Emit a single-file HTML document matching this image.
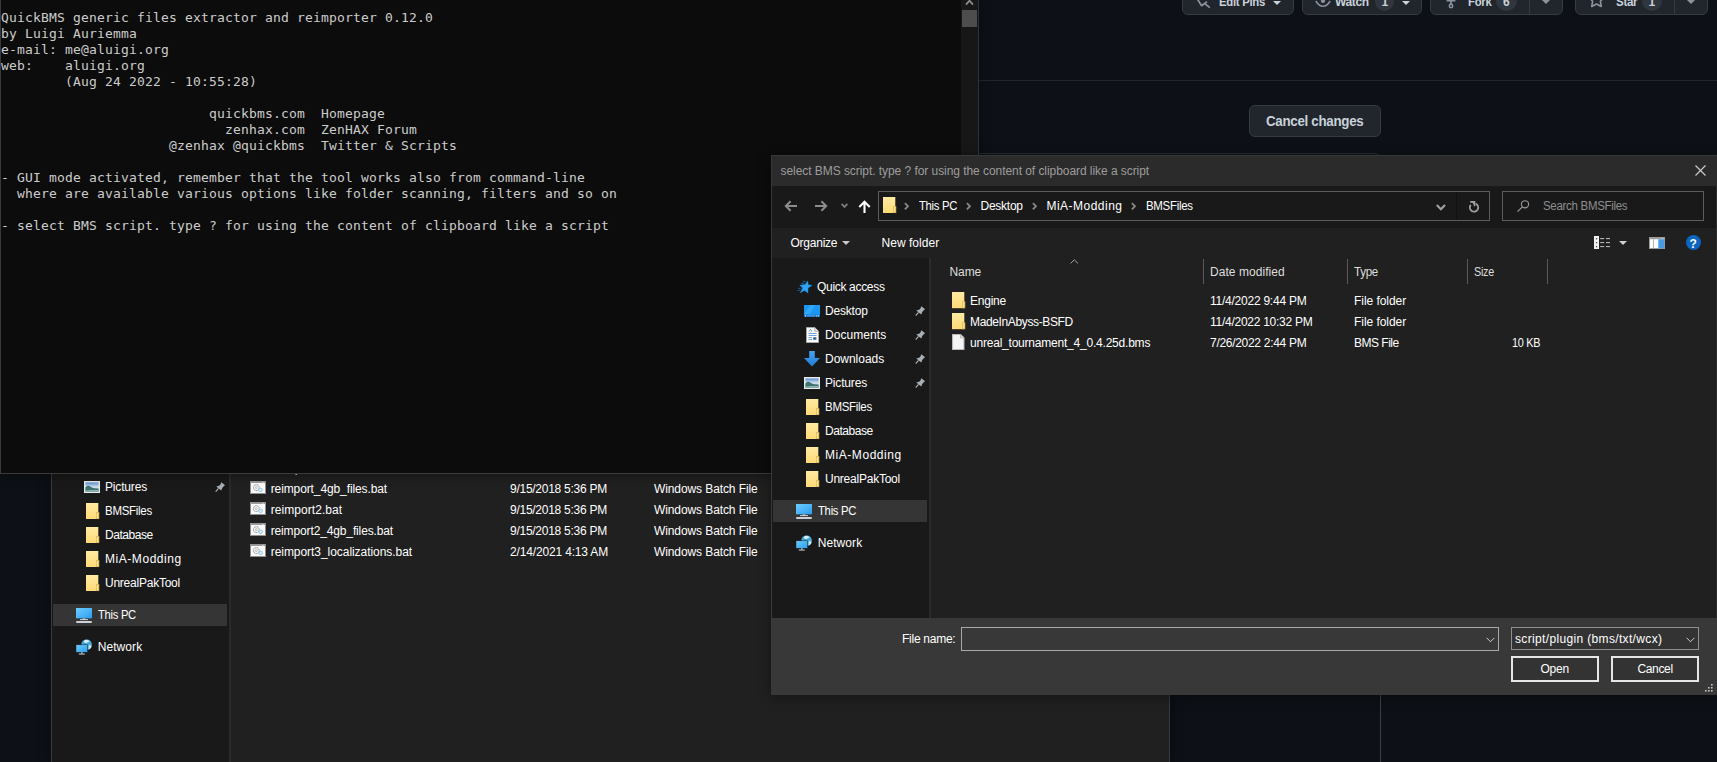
<!DOCTYPE html>
<html lang="en">
<head>
<meta charset="utf-8">
<title>QuickBMS - select BMS script</title>
<style>
*{box-sizing:border-box;margin:0;padding:0}
html,body{width:1717px;height:762px;overflow:hidden;background:#0d1117}
body{position:relative;font-family:"Liberation Sans",sans-serif;font-size:12px;color:#fff}
.r{position:absolute}
.t{position:absolute;white-space:nowrap;line-height:16px;height:16px}
svg{position:absolute;overflow:visible}
.ghb{position:absolute;top:-14px;height:29px;background:#21262d;border:1px solid #363b42;border-radius:6px}
.pill{position:absolute;top:-10px;height:21px;border-radius:10.5px;background:#30363d}
.caret{position:absolute;width:0;height:0;border-left:4px solid transparent;border-right:4px solid transparent;border-top:4px solid #c9d1d9}
pre{position:absolute;left:1px;top:10px;font-family:"DejaVu Sans Mono","Liberation Mono",monospace;font-size:13px;letter-spacing:.174px;line-height:16px;color:#cccccc}
</style>
</head>
<body>
<svg width="0" height="0" style="left:-10px;top:-10px" aria-hidden="true">
<linearGradient id="gf" x1="0" y1="0" x2="0" y2="1"><stop offset="0" stop-color="#ffe9a2"/><stop offset="1" stop-color="#ffdb76"/></linearGradient>
<linearGradient id="gb" x1="0" y1="0" x2="0" y2="1"><stop offset="0" stop-color="#45a3ee"/><stop offset="1" stop-color="#1e7fd8"/></linearGradient>
<linearGradient id="gs" x1="0" y1="0" x2="1" y2="1"><stop offset="0" stop-color="#6fcbff"/><stop offset="1" stop-color="#2a9ff0"/></linearGradient>
<linearGradient id="gd" x1="0" y1="0" x2="1" y2="1"><stop offset="0" stop-color="#1592f0"/><stop offset=".5" stop-color="#2aa6fb"/><stop offset="1" stop-color="#1490ee"/></linearGradient>
<linearGradient id="gp" x1="0" y1="0" x2="0" y2="1"><stop offset="0" stop-color="#4a84c6"/><stop offset=".5" stop-color="#cfe2ef"/><stop offset="1" stop-color="#6fa3ab"/></linearGradient>
</svg>
<section id="github-page" aria-label="GitHub repository page (background browser window)">
<div class="r" style="left:978px;top:80px;width:739px;height:1px;background:#21262d;"></div>
<div class="r" style="left:900px;top:153px;width:481px;height:700px;border:1px solid #262c34;border-right-color:#3a4048;border-radius:6px"></div>
<div class="ghb" style="left:1182px;width:112px"></div>
<div class="ghb" style="left:1302px;width:120px"></div>
<div class="ghb" style="left:1430px;width:133px"></div><div class="r" style="left:1529px;top:-14px;width:1px;height:28px;background:#363b42;"></div>
<div class="ghb" style="left:1575px;width:133px"></div><div class="r" style="left:1674px;top:-14px;width:1px;height:28px;background:#363b42;"></div>
<div class="pill" style="left:1375px;width:19px"></div>
<div class="pill" style="left:1496px;width:21px"></div>
<div class="pill" style="left:1642px;width:20px"></div>
<div class="t" style="top:-6px;left:1219.3px;color:#c9d1d9;font-weight:bold;transform:scaleX(0.944);transform-origin:0 50%;letter-spacing:-0.300px;">Edit Pins</div>
<div class="t" style="top:-6px;left:1335px;color:#c9d1d9;font-weight:bold;letter-spacing:-0.341px;">Watch</div>
<div class="t" style="top:-6px;left:1381.5px;color:#c9d1d9;font-weight:bold;">1</div>
<div class="t" style="top:-6px;left:1467.5px;color:#c9d1d9;font-weight:bold;transform:scaleX(0.944);transform-origin:0 50%;letter-spacing:-0.300px;">Fork</div>
<div class="t" style="top:-6px;left:1503px;color:#c9d1d9;font-weight:bold;">6</div>
<div class="t" style="top:-6px;left:1615.8px;color:#c9d1d9;font-weight:bold;transform:scaleX(0.962);transform-origin:0 50%;letter-spacing:-0.300px;">Star</div>
<div class="t" style="top:-6px;left:1648.5px;color:#c9d1d9;font-weight:bold;">1</div>
<div class="caret" style="left:1272.8px;top:1px"></div>
<div class="caret" style="left:1401.5px;top:1px"></div>
<div class="caret" style="left:1542px;top:0px;border-top-color:#8b949e"></div>
<div class="caret" style="left:1687px;top:0px;border-top-color:#8b949e"></div>
<svg style="left:1194px;top:-8px" width="16" height="16" viewBox="0 0 16 16"><path d="M2.7 6 7.6 13.7 13 9.6M10.5 11.3 15.8 15.7" stroke="#8b949e" stroke-width="1.7" fill="none" stroke-linejoin="round"/></svg>
<svg style="left:1315px;top:-7.4px" width="16" height="16" viewBox="0 0 16 16"><path d="M.8 8C3 11.6 5.5 13.3 8 13.3 10.5 13.3 13 11.6 15.2 8" stroke="#8b949e" stroke-width="1.5" fill="none"/><circle cx="8" cy="8" r="2.1" fill="#8b949e"/></svg>
<svg style="left:1443px;top:-7px" width="16" height="16" viewBox="0 0 16 16"><path d="M8 5V11" stroke="#8b949e" stroke-width="1.7"/><path d="M3.6 7.6H12.4" stroke="#8b949e" stroke-width="1.8"/><circle cx="8" cy="13" r="1.7" fill="none" stroke="#8b949e" stroke-width="1.5"/></svg>
<svg style="left:1587.6px;top:-9.3px" width="17" height="17" viewBox="0 0 16 16"><path d="M8 .8 10.2 5.4 15.2 6.1 11.6 9.6 12.5 14.6 8 12.2 3.5 14.6 4.4 9.6 .8 6.1 5.8 5.4Z" stroke="#8b949e" stroke-width="1.5" fill="none" stroke-linejoin="round"/></svg>
<div class="r" style="left:1249px;top:105px;width:132px;height:32px;background:#21262d;border:1px solid #363b42;border-radius:6px"></div>
<div class="t" style="top:111px;left:1266px;color:#c9d1d9;font-size:14px;line-height:20px;height:20px;font-weight:bold;transform:scaleX(0.951);transform-origin:0 50%;letter-spacing:-0.300px;">Cancel changes</div>
</section>
<section id="explorer-window" aria-label="File Explorer window">
<div class="r" style="left:51px;top:473px;width:1119px;height:289px;background:#202020;box-shadow:0 0 12px rgba(0,0,0,.45)"></div>
<div class="r" style="left:51px;top:473px;width:1px;height:289px;background:#3a3a3a;"></div>
<div class="r" style="left:1169px;top:473px;width:1px;height:289px;background:#3a3a3a;"></div>
<div class="r" style="left:52px;top:473px;width:177px;height:289px;background:#191919;"></div>
<div class="r" style="left:229px;top:473px;width:2px;height:289px;background:#2a2a2a;"></div>
<div class="r" style="left:53px;top:604px;width:174px;height:22px;background:#353535;"></div>
<svg class="ic-pics" style="left:84px;top:481px" width="16" height="12" viewBox="0 0 16 12" preserveAspectRatio="none"><rect x=".7" y=".7" width="14.6" height="10.6" fill="url(#gp)" stroke="#ececec" stroke-width="1.4"/><path d="M1.4 6.6C3 4.4 4.8 4.2 6.6 5.8 8.6 7.4 11 7.7 14.6 7.4V10.6H1.4Z" fill="#3f716e"/><path d="M1.4 9.3C5 8.8 10 9 14.6 8.9V10.6H1.4Z" fill="#8db3b6"/></svg>
<div class="t" style="top:479px;left:105px;letter-spacing:-0.166px;">Pictures</div>
<svg class="ic-folder" style="left:85.7px;top:503px" width="14" height="16" viewBox="0 0 14 16" preserveAspectRatio="none"><rect x="0" y="0" width="12.3" height="16" fill="url(#gf)"/><rect x="10.5" y="9.6" width="2.4" height="6.1" fill="#ffe48d" stroke="#dcb551" stroke-width=".7"/></svg>
<div class="t" style="top:503px;left:105px;transform:scaleX(0.958);transform-origin:0 50%;letter-spacing:-0.300px;">BMSFiles</div>
<svg class="ic-folder" style="left:85.7px;top:527px" width="14" height="16" viewBox="0 0 14 16" preserveAspectRatio="none"><rect x="0" y="0" width="12.3" height="16" fill="url(#gf)"/><rect x="10.5" y="9.6" width="2.4" height="6.1" fill="#ffe48d" stroke="#dcb551" stroke-width=".7"/></svg>
<div class="t" style="top:527px;left:105px;letter-spacing:-0.454px;">Database</div>
<svg class="ic-folder" style="left:85.7px;top:551px" width="14" height="16" viewBox="0 0 14 16" preserveAspectRatio="none"><rect x="0" y="0" width="12.3" height="16" fill="url(#gf)"/><rect x="10.5" y="9.6" width="2.4" height="6.1" fill="#ffe48d" stroke="#dcb551" stroke-width=".7"/></svg>
<div class="t" style="top:551px;left:105px;letter-spacing:0.550px;">MiA-Modding</div>
<svg class="ic-folder" style="left:85.7px;top:575px" width="14" height="16" viewBox="0 0 14 16" preserveAspectRatio="none"><rect x="0" y="0" width="12.3" height="16" fill="url(#gf)"/><rect x="10.5" y="9.6" width="2.4" height="6.1" fill="#ffe48d" stroke="#dcb551" stroke-width=".7"/></svg>
<div class="t" style="top:575px;left:105px;letter-spacing:-0.237px;">UnrealPakTool</div>
<svg class="ic-pc" style="left:76px;top:608px" width="16" height="15" viewBox="0 0 16 15" preserveAspectRatio="none"><rect x="0" y="0" width="16" height="10.3" fill="url(#gs)"/><rect x="6.7" y="10.3" width="2.6" height="1.2" fill="#9fb8c8"/><rect x="4" y="11.2" width="8" height=".9" fill="#dfe8ee"/><rect x="0" y="13.1" width="16" height="1.8" rx=".8" fill="#c9d2da"/></svg>
<div class="t" style="top:607px;left:97.7px;transform:scaleX(0.934);transform-origin:0 50%;letter-spacing:-0.300px;">This PC</div>
<svg class="ic-net" style="left:76px;top:639px" width="16" height="16" viewBox="0 0 16 16" preserveAspectRatio="none"><circle cx="10.6" cy="5.6" r="5.3" fill="#4aa6d8"/><path d="M7.5 2.2C9 .8 12 .6 13.6 2.2 12 2.6 11.4 4.2 9.6 4 8.6 3.8 8.2 2.8 7.5 2.2Z" fill="#d9f0fb"/><path d="M13 6C14.5 5.6 15.6 6.6 15.4 8 14.8 9.6 13.6 10.4 12.4 10.6 13 9 12.4 7.4 13 6Z" fill="#c8e8f6"/><rect x="0" y="5.8" width="11.6" height="7.5" fill="url(#gs)" stroke="#191919" stroke-width=".5"/><rect x="5" y="13.3" width="1.6" height="1.5" fill="#9fb8c8"/><rect x="2.8" y="14.6" width="6" height=".9" fill="#dfe8ee"/></svg>
<div class="t" style="top:639px;left:97.7px;letter-spacing:0.081px;">Network</div>
<svg class="ic-pin" style="left:215px;top:482px" width="10.5" height="10.5" viewBox="0 0 11 11" preserveAspectRatio="none"><path d="M6.7 .3 10.5 3.4 8.6 5 7.6 6.3 6.5 9 1.3 4.6 4.2 3.8 5.5 2.9Z" fill="#a7afb5"/><path d="M3.7 6.7 .7 10.2" stroke="#a7afb5" stroke-width="1.25"/></svg>
<svg class="ic-bat" style="left:250px;top:481px" width="16" height="13" viewBox="0 0 16 13" preserveAspectRatio="none"><rect x=".5" y=".5" width="15" height="12" fill="#fafafa" stroke="#8e8e8e"/><rect x=".5" y=".5" width="15" height="1.5" fill="#9a9a9a"/><rect x="12.2" y=".9" width="1.6" height=".7" fill="#e8e8e8"/><circle cx="6.3" cy="6.6" r="2.9" fill="none" stroke="#8c8c8c" stroke-width="1" stroke-dasharray="1.3 .45"/><circle cx="6.3" cy="6.6" r="1" fill="none" stroke="#999" stroke-width=".6"/><circle cx="10.6" cy="8.9" r="1.8" fill="#cfeafa" stroke="#86c4ea" stroke-width=".8"/><circle cx="10.6" cy="8.9" r=".5" fill="#fff"/></svg>
<div class="t" style="top:481px;left:270.7px;letter-spacing:-0.106px;">reimport_4gb_files.bat</div>
<div class="t" style="top:481px;left:510px;letter-spacing:-0.264px;">9/15/2018 5:36 PM</div>
<div class="t" style="top:481px;left:654px;letter-spacing:-0.099px;">Windows Batch File</div>
<svg class="ic-bat" style="left:250px;top:502px" width="16" height="13" viewBox="0 0 16 13" preserveAspectRatio="none"><rect x=".5" y=".5" width="15" height="12" fill="#fafafa" stroke="#8e8e8e"/><rect x=".5" y=".5" width="15" height="1.5" fill="#9a9a9a"/><rect x="12.2" y=".9" width="1.6" height=".7" fill="#e8e8e8"/><circle cx="6.3" cy="6.6" r="2.9" fill="none" stroke="#8c8c8c" stroke-width="1" stroke-dasharray="1.3 .45"/><circle cx="6.3" cy="6.6" r="1" fill="none" stroke="#999" stroke-width=".6"/><circle cx="10.6" cy="8.9" r="1.8" fill="#cfeafa" stroke="#86c4ea" stroke-width=".8"/><circle cx="10.6" cy="8.9" r=".5" fill="#fff"/></svg>
<div class="t" style="top:502px;left:270.7px;letter-spacing:0.066px;">reimport2.bat</div>
<div class="t" style="top:502px;left:510px;letter-spacing:-0.264px;">9/15/2018 5:36 PM</div>
<div class="t" style="top:502px;left:654px;letter-spacing:-0.099px;">Windows Batch File</div>
<svg class="ic-bat" style="left:250px;top:523px" width="16" height="13" viewBox="0 0 16 13" preserveAspectRatio="none"><rect x=".5" y=".5" width="15" height="12" fill="#fafafa" stroke="#8e8e8e"/><rect x=".5" y=".5" width="15" height="1.5" fill="#9a9a9a"/><rect x="12.2" y=".9" width="1.6" height=".7" fill="#e8e8e8"/><circle cx="6.3" cy="6.6" r="2.9" fill="none" stroke="#8c8c8c" stroke-width="1" stroke-dasharray="1.3 .45"/><circle cx="6.3" cy="6.6" r="1" fill="none" stroke="#999" stroke-width=".6"/><circle cx="10.6" cy="8.9" r="1.8" fill="#cfeafa" stroke="#86c4ea" stroke-width=".8"/><circle cx="10.6" cy="8.9" r=".5" fill="#fff"/></svg>
<div class="t" style="top:523px;left:270.7px;letter-spacing:-0.133px;">reimport2_4gb_files.bat</div>
<div class="t" style="top:523px;left:510px;letter-spacing:-0.264px;">9/15/2018 5:36 PM</div>
<div class="t" style="top:523px;left:654px;letter-spacing:-0.099px;">Windows Batch File</div>
<svg class="ic-bat" style="left:250px;top:544px" width="16" height="13" viewBox="0 0 16 13" preserveAspectRatio="none"><rect x=".5" y=".5" width="15" height="12" fill="#fafafa" stroke="#8e8e8e"/><rect x=".5" y=".5" width="15" height="1.5" fill="#9a9a9a"/><rect x="12.2" y=".9" width="1.6" height=".7" fill="#e8e8e8"/><circle cx="6.3" cy="6.6" r="2.9" fill="none" stroke="#8c8c8c" stroke-width="1" stroke-dasharray="1.3 .45"/><circle cx="6.3" cy="6.6" r="1" fill="none" stroke="#999" stroke-width=".6"/><circle cx="10.6" cy="8.9" r="1.8" fill="#cfeafa" stroke="#86c4ea" stroke-width=".8"/><circle cx="10.6" cy="8.9" r=".5" fill="#fff"/></svg>
<div class="t" style="top:544px;left:270.7px;letter-spacing:-0.048px;">reimport3_localizations.bat</div>
<div class="t" style="top:544px;left:510px;letter-spacing:-0.159px;">2/14/2021 4:13 AM</div>
<div class="t" style="top:544px;left:654px;letter-spacing:-0.099px;">Windows Batch File</div>
<div class="t" style="top:460px;left:270.7px;letter-spacing:0.197px;">reimport.bat</div>
</section>
<section id="console-window" aria-label="QuickBMS console">
<div class="r" style="left:0px;top:-2px;width:979px;height:476px;background:#0c0c0c;border:1px solid #3a3a3a;border-right-color:#30333a;box-shadow:0 2px 10px rgba(0,0,0,.35)"></div>
<pre>QuickBMS generic files extractor and reimporter 0.12.0
by Luigi Auriemma
e-mail: me@aluigi.org
web:    aluigi.org
        (Aug 24 2022 - 10:55:28)

                          quickbms.com  Homepage
                            zenhax.com  ZenHAX Forum
                     @zenhax @quickbms  Twitter &amp; Scripts

- GUI mode activated, remember that the tool works also from command-line
  where are available various options like folder scanning, filters and so on

- select BMS script. type ? for using the content of clipboard like a script
</pre>
<div class="r" style="left:961px;top:0px;width:17px;height:473px;background:#171717;"></div>
<div class="r" style="left:962px;top:10px;width:15px;height:17px;background:#4d4d4d;"></div>
<svg style="left:964px;top:-2px" width="11" height="8" viewBox="0 0 11 8"><path d="M2 6.6 5.5 2.6 9 6.6" stroke="#8d8d8d" stroke-width="1.7" fill="none"/></svg>
</section>
<section id="open-dialog" aria-label="Open file dialog">
<div class="r" style="left:771px;top:155px;width:946px;height:540px;background:#202020;box-shadow:0 2px 12px rgba(0,0,0,.4)"></div>
<div class="r" style="left:771px;top:155px;width:946px;height:31px;background:#2b2b2b;"></div>
<div class="r" style="left:771px;top:155px;width:946px;height:1px;background:#383838;"></div>
<div class="r" style="left:772px;top:186px;width:944px;height:42px;background:#191919;"></div>
<div class="r" style="left:772px;top:228px;width:944px;height:30px;background:#202020;"></div>
<div class="r" style="left:772px;top:258px;width:157px;height:360px;background:#191919;"></div>
<div class="r" style="left:929px;top:258px;width:2px;height:360px;background:#2a2a2a;"></div>
<div class="r" style="left:771px;top:156px;width:1px;height:462px;background:#383838;"></div>
<div class="r" style="left:1716px;top:186px;width:1px;height:432px;background:#2e2e2e;"></div>
<div class="r" style="left:771px;top:618px;width:946px;height:77px;background:#383838;"></div>
<div class="t" style="top:163px;left:780.5px;color:#9d9d9d;letter-spacing:-0.057px;">select BMS script. type ? for using the content of clipboard like a script</div>
<svg style="left:1695px;top:165px" width="11" height="11" viewBox="0 0 11 11"><path d="M.5.5 10.5 10.5M10.5.5 .5 10.5" stroke="#cfcfcf" stroke-width="1.1"/></svg>
<svg style="left:784px;top:199.8px" width="14" height="12" viewBox="0 0 14 12"><path d="M13 6H1.8M6.6 1.2 1.8 6 6.6 10.8" stroke="#8c8c8c" stroke-width="2" fill="none"/></svg>
<svg style="left:814px;top:199.8px" width="14" height="12" viewBox="0 0 14 12"><path d="M1 6H12.2M7.4 1.2 12.2 6 7.4 10.8" stroke="#8c8c8c" stroke-width="2" fill="none"/></svg>
<svg style="left:840.5px;top:203px" width="7" height="5" viewBox="0 0 7 5"><path d="M.6 .9 3.5 3.9 6.4 .9" stroke="#7c7c7c" stroke-width="1.8" fill="none"/></svg>
<svg style="left:858.4px;top:200.2px" width="13" height="13" viewBox="0 0 13 13"><path d="M6.5 13V1.7M1.3 6.9 6.5 1.7 11.7 6.9" stroke="#fff" stroke-width="2.1" fill="none"/></svg>
<div class="r" style="left:878px;top:191px;width:612px;height:30px;border:1px solid #5c5c5c;background:#191919"></div>
<div class="r" style="left:1456px;top:192px;width:1px;height:28px;background:#121212;"></div>
<svg class="ic-folder" style="left:882.7px;top:197px" width="14" height="16" viewBox="0 0 14 16" preserveAspectRatio="none"><rect x="0" y="0" width="12.3" height="16" fill="url(#gf)"/><rect x="10.5" y="9.6" width="2.4" height="6.1" fill="#ffe48d" stroke="#dcb551" stroke-width=".7"/></svg>
<svg style="left:903.8px;top:202.4px" width="5" height="8" viewBox="0 0 5 8"><path d="M.9 1.1 4 4.2 .9 7.3" stroke="#8c8c8c" stroke-width="1.7" fill="none"/></svg>
<svg style="left:965.8px;top:202.4px" width="5" height="8" viewBox="0 0 5 8"><path d="M.9 1.1 4 4.2 .9 7.3" stroke="#8c8c8c" stroke-width="1.7" fill="none"/></svg>
<svg style="left:1031.8px;top:202.4px" width="5" height="8" viewBox="0 0 5 8"><path d="M.9 1.1 4 4.2 .9 7.3" stroke="#8c8c8c" stroke-width="1.7" fill="none"/></svg>
<svg style="left:1130.8px;top:202.4px" width="5" height="8" viewBox="0 0 5 8"><path d="M.9 1.1 4 4.2 .9 7.3" stroke="#8c8c8c" stroke-width="1.7" fill="none"/></svg>
<div class="t" style="top:198px;left:918.5px;transform:scaleX(0.939);transform-origin:0 50%;letter-spacing:-0.300px;">This PC</div>
<div class="t" style="top:198px;left:980.5px;letter-spacing:-0.255px;">Desktop</div>
<div class="t" style="top:198px;left:1046.5px;letter-spacing:0.480px;">MiA-Modding</div>
<div class="t" style="top:198px;left:1145.5px;transform:scaleX(0.954);transform-origin:0 50%;letter-spacing:-0.300px;">BMSFiles</div>
<svg style="left:1436px;top:203.5px" width="10" height="7" viewBox="0 0 10 7"><path d="M.8 1 4.9 5.3 9 1" stroke="#a0a0a0" stroke-width="2.1" fill="none"/></svg>
<svg style="left:1468px;top:199.7px" width="12" height="13" viewBox="0 0 12 13"><path d="M7.6 3.6A4.2 4.2 0 1 1 2.7 4.9" stroke="#a0a0a0" stroke-width="1.75" fill="none"/><path d="M2.2 1.9H6.5V6.3" stroke="#a0a0a0" stroke-width="1.6" fill="none"/><path d="M3.6 2.2H6.4V4.8Z" fill="#a0a0a0"/></svg>
<div class="r" style="left:1502px;top:191px;width:202px;height:30px;border:1px solid #5c5c5c;background:#191919"></div>
<svg style="left:1517px;top:200px" width="13" height="12" viewBox="0 0 13 12"><circle cx="8" cy="4.3" r="3.6" stroke="#9a9a9a" stroke-width="1.1" fill="none"/><path d="M5.4 6.9 .5 11.6" stroke="#9a9a9a" stroke-width="1.2"/></svg>
<div class="t" style="top:198px;left:1543.2px;color:#8e8e8e;transform:scaleX(0.956);transform-origin:0 50%;letter-spacing:-0.300px;">Search BMSFiles</div>
<div class="t" style="top:235px;left:790.5px;letter-spacing:-0.243px;">Organize</div>
<div class="caret" style="left:842px;top:241px;border-top-color:#c8c8c8;border-left-width:4.3px;border-right-width:4.3px;border-top-width:4.5px"></div>
<div class="t" style="top:235px;left:881.5px;letter-spacing:0.038px;">New folder</div>
<svg style="left:1594px;top:236px" width="16" height="13" viewBox="0 0 16 13"><rect x="0" y="0" width="5" height="13" fill="#f2f2f2"/><rect x="1.9" y="2" width="1.3" height="1.3" fill="#444"/><rect x="1.9" y="6" width="1.3" height="1.3" fill="#456"/><rect x="1.9" y="10" width="1.3" height="1.3" fill="#644"/><path d="M6.2 2.6H10.2M12 2.6H16M6.2 6.6H10.2M12 6.6H16M6.2 10.6H10.2M12 10.6H16" stroke="#c4c4c4" stroke-width="1"/></svg>
<div class="caret" style="left:1619.2px;top:240.8px;border-top-color:#d0d0d0;border-left-width:4.4px;border-right-width:4.4px;border-top-width:4.9px"></div>
<svg style="left:1649px;top:237px" width="16" height="12" viewBox="0 0 16 12"><rect x=".5" y=".5" width="15" height="11" fill="#fbfbfb" stroke="#9c9c9c"/><rect x=".5" y=".5" width="15" height="1.7" fill="#9c9c9c"/><rect x="11.8" y=".9" width="1" height=".8" fill="#ddd"/><rect x="13.6" y=".9" width="1" height=".8" fill="#ddd"/><rect x="4" y="2.2" width="1" height="9" fill="#b5b5b5"/><rect x="9.3" y="2.2" width="6" height="9.2" fill="#4a9ce2"/></svg>
<div class="r" style="left:1685.7px;top:235.2px;width:15.2px;height:15.2px;border-radius:50%;background:#0b65c2"></div>
<div class="t" style="top:236px;left:1689.6px;color:#fff;font-weight:bold;">?</div>
<div class="r" style="left:1203px;top:259px;width:1px;height:25px;background:#5a5a5a;"></div>
<div class="r" style="left:1347px;top:259px;width:1px;height:25px;background:#5a5a5a;"></div>
<div class="r" style="left:1467px;top:259px;width:1px;height:25px;background:#5a5a5a;"></div>
<div class="r" style="left:1547px;top:259px;width:1px;height:25px;background:#5a5a5a;"></div>
<div class="t" style="top:264px;left:949.5px;color:#dedede;letter-spacing:-0.105px;">Name</div>
<div class="t" style="top:264px;left:1210px;color:#dedede;letter-spacing:0.054px;">Date modified</div>
<div class="t" style="top:264px;left:1354px;color:#dedede;transform:scaleX(0.964);transform-origin:0 50%;letter-spacing:-0.300px;">Type</div>
<div class="t" style="top:264px;left:1474px;color:#dedede;transform:scaleX(0.900);transform-origin:0 50%;letter-spacing:-0.300px;">Size</div>
<svg style="left:1069.7px;top:258.9px" width="9" height="5" viewBox="0 0 9 5"><path d="M.6 4.4 4.3 .8 8 4.4" stroke="#a0a0a0" stroke-width="1" fill="none"/></svg>
<svg class="ic-folder" style="left:951.6px;top:291.8px" width="14" height="16.2" viewBox="0 0 14 16" preserveAspectRatio="none"><rect x="0" y="0" width="12.3" height="16" fill="url(#gf)"/><rect x="10.5" y="9.6" width="2.4" height="6.1" fill="#ffe48d" stroke="#dcb551" stroke-width=".7"/></svg>
<div class="t" style="top:293px;left:970px;letter-spacing:-0.235px;">Engine</div>
<div class="t" style="top:293px;left:1210px;letter-spacing:-0.239px;">11/4/2022 9:44 PM</div>
<div class="t" style="top:293px;left:1354px;letter-spacing:-0.049px;">File folder</div>
<svg class="ic-folder" style="left:951.6px;top:312.8px" width="14" height="16.2" viewBox="0 0 14 16" preserveAspectRatio="none"><rect x="0" y="0" width="12.3" height="16" fill="url(#gf)"/><rect x="10.5" y="9.6" width="2.4" height="6.1" fill="#ffe48d" stroke="#dcb551" stroke-width=".7"/></svg>
<div class="t" style="top:314px;left:970px;letter-spacing:-0.367px;">MadeInAbyss-BSFD</div>
<div class="t" style="top:314px;left:1210px;letter-spacing:-0.265px;">11/4/2022 10:32 PM</div>
<div class="t" style="top:314px;left:1354px;letter-spacing:-0.049px;">File folder</div>
<svg class="ic-file" style="left:951.6px;top:334px" width="12.5" height="16" viewBox="0 0 12 16" preserveAspectRatio="none"><path d="M.5.5H8.2L11.5 3.8V15.5H.5Z" fill="#f4f4f4" stroke="#b9b9b9" stroke-width="1"/><path d="M8.2.5V3.8H11.5" fill="#dcdcdc" stroke="#b0b0b0" stroke-width=".8"/></svg>
<div class="t" style="top:335px;left:970px;letter-spacing:-0.213px;">unreal_tournament_4_0.4.25d.bms</div>
<div class="t" style="top:335px;left:1210px;letter-spacing:-0.295px;">7/26/2022 2:44 PM</div>
<div class="t" style="top:335px;left:1354px;letter-spacing:-0.498px;">BMS File</div>
<div class="t" style="top:335px;left:1511.8px;transform:scaleX(0.901);transform-origin:0 50%;letter-spacing:-0.300px;">10 KB</div>
<div class="r" style="left:773px;top:500px;width:154px;height:22px;background:#353535;"></div>
<svg class="ic-star" style="left:797px;top:280px" width="16" height="14" viewBox="0 0 16 14" preserveAspectRatio="none"><path d="M10.65 .9 11.3 4.85 15.1 5.4 11.05 8 10.9 13 7.5 10.4 3.15 12.75 5.65 8 2.75 5.25 8 4.6Z" fill="#2ea3f5" stroke="#1c86dc" stroke-width=".5" stroke-linejoin="round"/><path d="M5.9 1.3H8.5M4.1 3.3H7M1.2 8.4H3.8M.4 10.4H2.8" stroke="#1d72b6" stroke-width=".8" fill="none"/></svg>
<div class="t" style="top:279px;left:817px;letter-spacing:-0.314px;">Quick access</div>
<svg class="ic-desk" style="left:804px;top:305px" width="16" height="12" viewBox="0 0 16 12" preserveAspectRatio="none"><rect width="16" height="12" fill="#1a97f3"/><path d="M6 0H11.5L5.5 9.6H0Z" fill="#3aa9fa" opacity=".75"/><rect y="9.7" width="16" height="2.3" fill="#0f6ec6"/><rect x="1" y="10.4" width="1.1" height="1" fill="#fff"/><rect x="3" y="10.65" width="8.4" height=".5" fill="#b5dafa"/><rect x="12.2" y="10.4" width="1" height="1" fill="#fff"/><rect x="13.9" y="10.4" width="1" height="1" fill="#fff"/></svg>
<div class="t" style="top:303px;left:825px;letter-spacing:-0.189px;">Desktop</div>
<svg class="ic-docs" style="left:805.6px;top:327px" width="13" height="16" viewBox="0 0 13 16" preserveAspectRatio="none"><path d="M.5.5H8.7L12.5 4.3V15.5H.5Z" fill="#fbfbfb" stroke="#a8a8a8"/><path d="M8.7.5V4.3H12.5" fill="#e3e3e3" stroke="#a8a8a8" stroke-width=".8"/><path d="M2.5 6.5H10.5M2.5 8.5H10.5M2.5 10.6H6M2.5 12.6H6" stroke="#4a8fd0" stroke-width=".8"/><rect x="7.2" y="10.2" width="3.2" height="2.6" fill="#35679f"/><path d="M3.2 4.6 4.6 2.3 6 4.6" stroke="#4a8fd0" fill="none" stroke-width=".8"/></svg>
<div class="t" style="top:327px;left:825px;letter-spacing:0.062px;">Documents</div>
<svg class="ic-down" style="left:804px;top:351px" width="16" height="15.8" viewBox="0 0 16 16" preserveAspectRatio="none"><path d="M5.2 0H10.8V7.2H16L8 15.8 0 7.2H5.2Z" fill="url(#gb)"/></svg>
<div class="t" style="top:351px;left:825px;letter-spacing:-0.022px;">Downloads</div>
<svg class="ic-pics" style="left:804px;top:377px" width="16" height="12" viewBox="0 0 16 12" preserveAspectRatio="none"><rect x=".7" y=".7" width="14.6" height="10.6" fill="url(#gp)" stroke="#ececec" stroke-width="1.4"/><path d="M1.4 6.6C3 4.4 4.8 4.2 6.6 5.8 8.6 7.4 11 7.7 14.6 7.4V10.6H1.4Z" fill="#3f716e"/><path d="M1.4 9.3C5 8.8 10 9 14.6 8.9V10.6H1.4Z" fill="#8db3b6"/></svg>
<div class="t" style="top:375px;left:825px;letter-spacing:-0.166px;">Pictures</div>
<svg class="ic-folder" style="left:805.7px;top:399px" width="14" height="16" viewBox="0 0 14 16" preserveAspectRatio="none"><rect x="0" y="0" width="12.3" height="16" fill="url(#gf)"/><rect x="10.5" y="9.6" width="2.4" height="6.1" fill="#ffe48d" stroke="#dcb551" stroke-width=".7"/></svg>
<div class="t" style="top:399px;left:825px;transform:scaleX(0.958);transform-origin:0 50%;letter-spacing:-0.300px;">BMSFiles</div>
<svg class="ic-folder" style="left:805.7px;top:423px" width="14" height="16" viewBox="0 0 14 16" preserveAspectRatio="none"><rect x="0" y="0" width="12.3" height="16" fill="url(#gf)"/><rect x="10.5" y="9.6" width="2.4" height="6.1" fill="#ffe48d" stroke="#dcb551" stroke-width=".7"/></svg>
<div class="t" style="top:423px;left:825px;letter-spacing:-0.454px;">Database</div>
<svg class="ic-folder" style="left:805.7px;top:447px" width="14" height="16" viewBox="0 0 14 16" preserveAspectRatio="none"><rect x="0" y="0" width="12.3" height="16" fill="url(#gf)"/><rect x="10.5" y="9.6" width="2.4" height="6.1" fill="#ffe48d" stroke="#dcb551" stroke-width=".7"/></svg>
<div class="t" style="top:447px;left:825px;letter-spacing:0.550px;">MiA-Modding</div>
<svg class="ic-folder" style="left:805.7px;top:471px" width="14" height="16" viewBox="0 0 14 16" preserveAspectRatio="none"><rect x="0" y="0" width="12.3" height="16" fill="url(#gf)"/><rect x="10.5" y="9.6" width="2.4" height="6.1" fill="#ffe48d" stroke="#dcb551" stroke-width=".7"/></svg>
<div class="t" style="top:471px;left:825px;letter-spacing:-0.237px;">UnrealPakTool</div>
<svg class="ic-pin" style="left:914.6px;top:305.7px" width="10.5" height="10.5" viewBox="0 0 11 11" preserveAspectRatio="none"><path d="M6.7 .3 10.5 3.4 8.6 5 7.6 6.3 6.5 9 1.3 4.6 4.2 3.8 5.5 2.9Z" fill="#a7afb5"/><path d="M3.7 6.7 .7 10.2" stroke="#a7afb5" stroke-width="1.25"/></svg>
<svg class="ic-pin" style="left:914.6px;top:329.7px" width="10.5" height="10.5" viewBox="0 0 11 11" preserveAspectRatio="none"><path d="M6.7 .3 10.5 3.4 8.6 5 7.6 6.3 6.5 9 1.3 4.6 4.2 3.8 5.5 2.9Z" fill="#a7afb5"/><path d="M3.7 6.7 .7 10.2" stroke="#a7afb5" stroke-width="1.25"/></svg>
<svg class="ic-pin" style="left:914.6px;top:353.7px" width="10.5" height="10.5" viewBox="0 0 11 11" preserveAspectRatio="none"><path d="M6.7 .3 10.5 3.4 8.6 5 7.6 6.3 6.5 9 1.3 4.6 4.2 3.8 5.5 2.9Z" fill="#a7afb5"/><path d="M3.7 6.7 .7 10.2" stroke="#a7afb5" stroke-width="1.25"/></svg>
<svg class="ic-pin" style="left:914.6px;top:377.7px" width="10.5" height="10.5" viewBox="0 0 11 11" preserveAspectRatio="none"><path d="M6.7 .3 10.5 3.4 8.6 5 7.6 6.3 6.5 9 1.3 4.6 4.2 3.8 5.5 2.9Z" fill="#a7afb5"/><path d="M3.7 6.7 .7 10.2" stroke="#a7afb5" stroke-width="1.25"/></svg>
<svg class="ic-pc" style="left:796px;top:504px" width="16" height="15" viewBox="0 0 16 15" preserveAspectRatio="none"><rect x="0" y="0" width="16" height="10.3" fill="url(#gs)"/><rect x="6.7" y="10.3" width="2.6" height="1.2" fill="#9fb8c8"/><rect x="4" y="11.2" width="8" height=".9" fill="#dfe8ee"/><rect x="0" y="13.1" width="16" height="1.8" rx=".8" fill="#c9d2da"/></svg>
<div class="t" style="top:503px;left:817.7px;transform:scaleX(0.942);transform-origin:0 50%;letter-spacing:-0.300px;">This PC</div>
<svg class="ic-net" style="left:796px;top:535px" width="16" height="16" viewBox="0 0 16 16" preserveAspectRatio="none"><circle cx="10.6" cy="5.6" r="5.3" fill="#4aa6d8"/><path d="M7.5 2.2C9 .8 12 .6 13.6 2.2 12 2.6 11.4 4.2 9.6 4 8.6 3.8 8.2 2.8 7.5 2.2Z" fill="#d9f0fb"/><path d="M13 6C14.5 5.6 15.6 6.6 15.4 8 14.8 9.6 13.6 10.4 12.4 10.6 13 9 12.4 7.4 13 6Z" fill="#c8e8f6"/><rect x="0" y="5.8" width="11.6" height="7.5" fill="url(#gs)" stroke="#191919" stroke-width=".5"/><rect x="5" y="13.3" width="1.6" height="1.5" fill="#9fb8c8"/><rect x="2.8" y="14.6" width="6" height=".9" fill="#dfe8ee"/></svg>
<div class="t" style="top:535px;left:817.7px;letter-spacing:0.081px;">Network</div>
<div class="t" style="top:631px;left:902px;letter-spacing:-0.259px;">File name:</div>
<div class="r" style="left:961px;top:627px;width:538px;height:24px;border:1px solid #a9a9a9;background:#383838"></div>
<svg style="left:1485.5px;top:637px" width="9" height="6" viewBox="0 0 9 6"><path d="M.6 .8 4.5 4.7 8.4 .8" stroke="#d0d0d0" stroke-width="1" fill="none"/></svg>
<div class="r" style="left:1511px;top:627px;width:188px;height:23px;border:1px solid #8f8f8f;background:#333"></div>
<div class="t" style="top:631px;left:1515px;letter-spacing:0.345px;">script/plugin (bms/txt/wcx)</div>
<svg style="left:1685.5px;top:636.5px" width="9" height="6" viewBox="0 0 9 6"><path d="M.6 .8 4.5 4.7 8.4 .8" stroke="#d0d0d0" stroke-width="1" fill="none"/></svg>
<div class="r" style="left:1511px;top:656px;width:88px;height:26px;border:2px solid #e6e6e6;background:#333"></div>
<div class="r" style="left:1611px;top:656px;width:88px;height:26px;border:2px solid #e6e6e6;background:#333"></div>
<div class="t" style="top:661px;left:1540.5px;letter-spacing:-0.220px;">Open</div>
<div class="t" style="top:661px;left:1637.4px;letter-spacing:-0.332px;">Cancel</div>
<svg style="left:1705.4px;top:684.4px" width="8" height="8" viewBox="0 0 8 8"><rect x="6" y="0" width="1.6" height="1.6" fill="#c4c4c4"/><rect x="3" y="3" width="1.6" height="1.6" fill="#c4c4c4"/><rect x="6" y="3" width="1.6" height="1.6" fill="#c4c4c4"/><rect x="0" y="6" width="1.6" height="1.6" fill="#c4c4c4"/><rect x="3" y="6" width="1.6" height="1.6" fill="#c4c4c4"/><rect x="6" y="6" width="1.6" height="1.6" fill="#c4c4c4"/></svg>
</section>
</body>
</html>
